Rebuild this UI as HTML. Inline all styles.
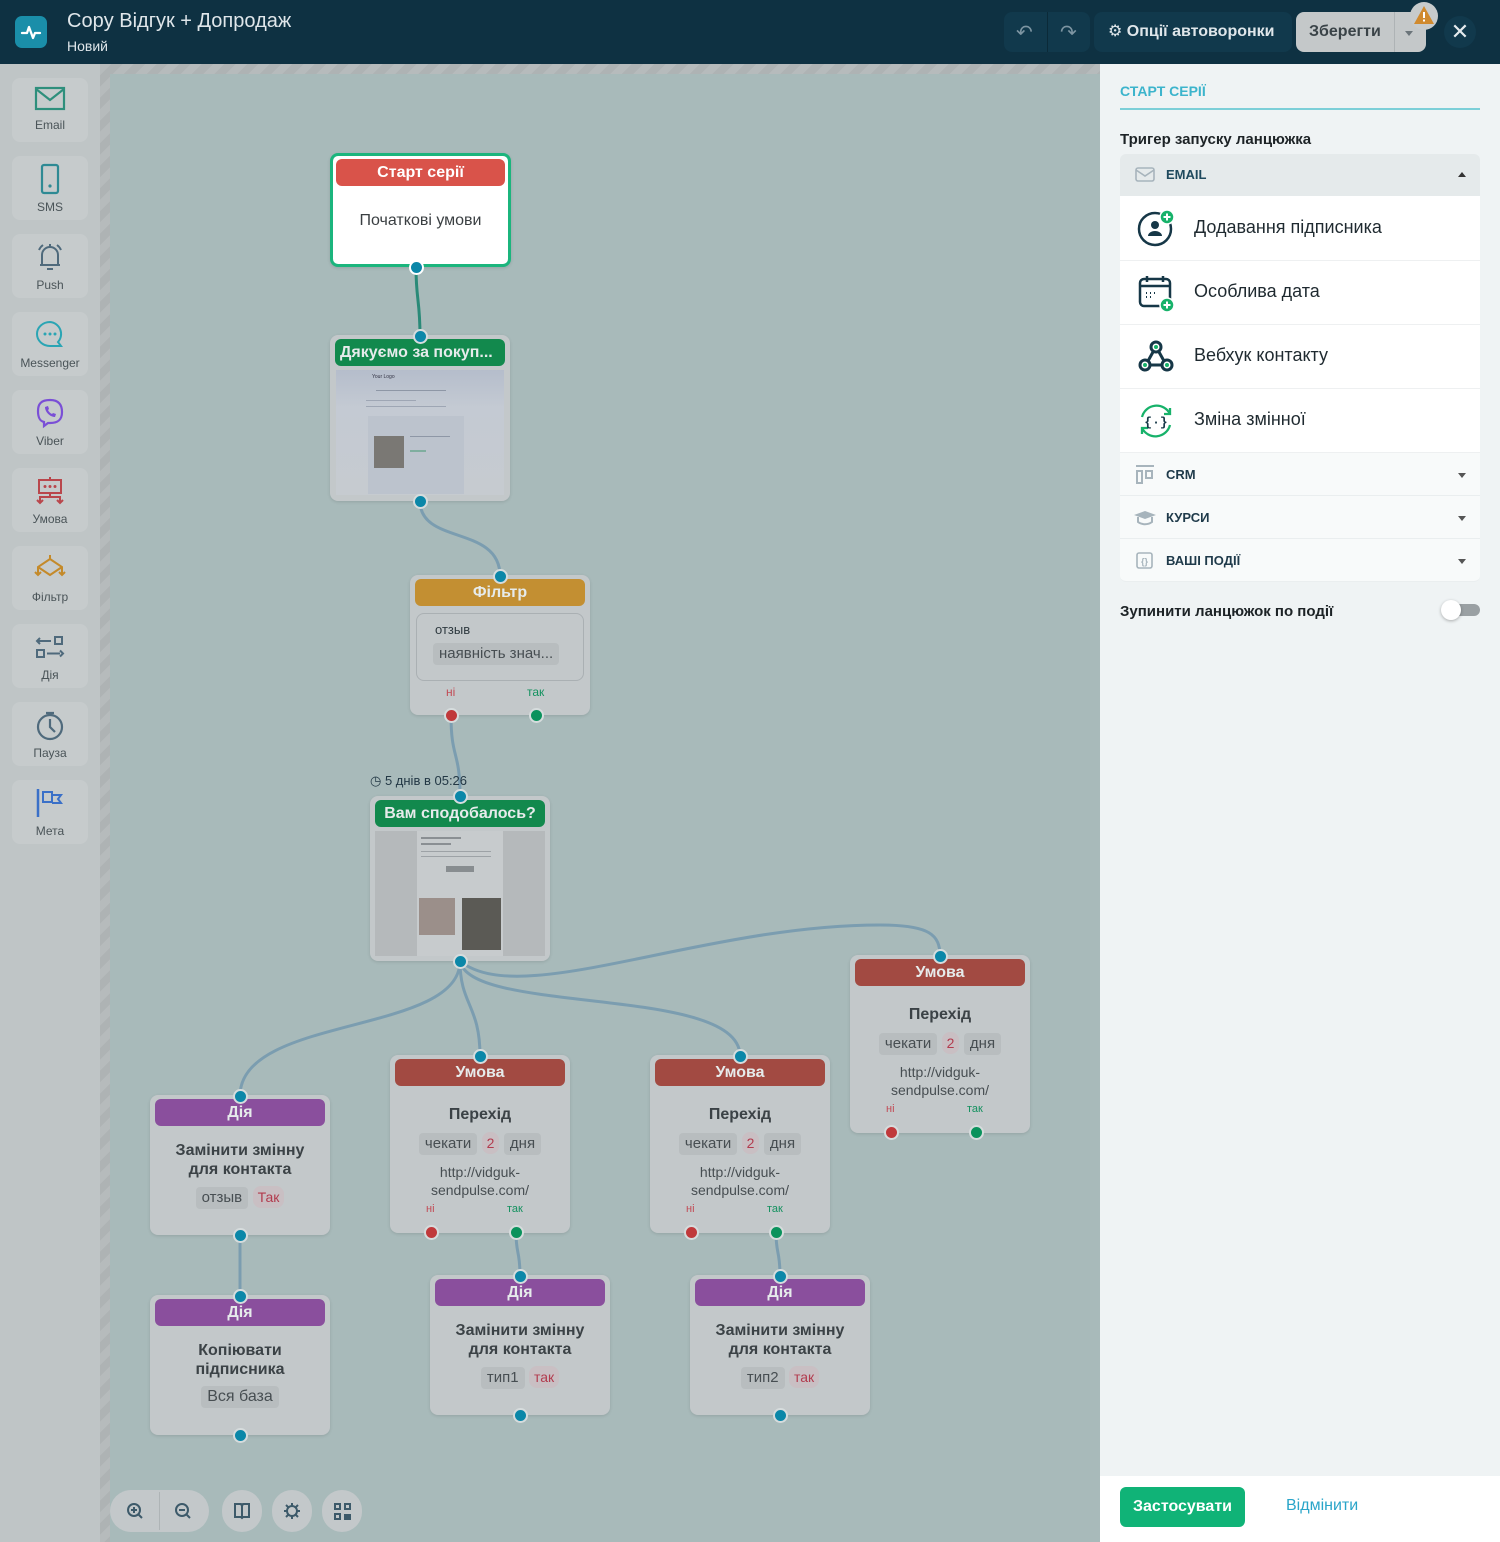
<!DOCTYPE html>
<html><head><meta charset="utf-8">
<style>
*{box-sizing:border-box;margin:0;padding:0}
body{width:1500px;height:1542px;position:relative;overflow:hidden;font-family:"Liberation Sans","DejaVu Sans",sans-serif;background:#a8baba}
.abs{position:absolute}
#top{left:0;top:0;width:1500px;height:64px;background:#0e3142}
#side{left:0;top:64px;width:100px;height:1478px;background:#bfc5c6}
.hatch{background:repeating-linear-gradient(135deg,#b6bbbc 0 8px,#aeb3b4 8px 16px)}
.si{position:absolute;left:12px;width:76px;height:64px;background:#c6cbcc;border-radius:8px;text-align:center;font-size:12px;color:#4a5458}
.si svg{display:block;margin:6px auto 4px}
.n{position:absolute;background:#c3c8ca;border-radius:8px;box-shadow:0 1px 3px rgba(0,0,0,.12);text-align:center;color:#3b4246}
.h{margin:4px 5px 0;height:27px;border-radius:6px;color:#e6ebeb;font-weight:bold;font-size:16px;line-height:27px;text-align:center}
.red{background:#a24a42}.pur{background:#8a4f9d}.grn{background:#12894d}
.t{font-weight:bold;font-size:16px;line-height:19px;color:#3b4246}
.tag{display:inline-block;background:#b8bdbf;border-radius:4px;padding:0 6px;font-size:15px;line-height:22px;color:#474e52}
.tr{display:inline-block;background:#c9bfc3;border-radius:8px;padding:0 5px;font-size:14px;line-height:22px;color:#b23b4e}
.d{position:absolute;width:15px;height:15px;border-radius:50%;background:#0b87a8;border:2px solid #d6dcdd;transform:translate(-7px,-7px)}
.dr{background:#c0393b}.dg{background:#0a925c}
.lbl{position:absolute;font-size:12px}
.row{position:absolute;left:1120px;width:360px;background:#fff;border-bottom:1px solid #eef0f1;font-size:18px;color:#1f2a30}
.sub{position:absolute;left:1120px;width:360px;height:43px;background:#f8fafa;border-bottom:1px solid #eaeeef;font-size:13px;font-weight:bold;color:#1f3a4a;line-height:43px;padding-left:46px}
.car{position:absolute;right:14px;top:20px;border:4px solid transparent;border-top:5px solid #555}
.tb{position:absolute;top:1490px;height:42px;background:#c3c8ca;border-radius:21px}
.ln{height:2px;background:#a9b1bd;margin:5px 8px}
</style></head><body>

<div id="top" class="abs">
  <div class="abs" style="left:15px;top:16px;width:32px;height:32px;background:#1a8ea9;border-radius:7px">
    <svg width="32" height="32" viewBox="0 0 32 32"><path d="M7 17h5l2-6 4 11 2-5h5" fill="none" stroke="#fff" stroke-width="2.3" stroke-linecap="round" stroke-linejoin="round"/></svg>
  </div>
  <div class="abs" style="left:67px;top:10px;font-size:20px;color:#dfe6ea">Copy Відгук + Допродаж</div>
  <div class="abs" style="left:67px;top:38px;font-size:14px;color:#dfe6ea">Новий</div>
  <div class="abs" style="left:1004px;top:12px;width:86px;height:40px;background:#11394c;border-radius:8px"></div>
  <div class="abs" style="left:1047px;top:12px;width:1px;height:40px;background:#0b2a38"></div>
  <div class="abs" style="left:1016px;top:20px;font-size:20px;color:#7d95a2">↶</div>
  <div class="abs" style="left:1060px;top:20px;font-size:20px;color:#7d95a2">↷</div>
  <div class="abs" style="left:1094px;top:12px;width:198px;height:40px;background:#11394c;border-radius:8px;color:#dfe6ea;font-weight:bold;font-size:16px;line-height:40px;padding-left:14px">⚙ Опції автоворонки</div>
  <div class="abs" style="left:1296px;top:12px;width:130px;height:40px;background:#c4c8c9;border-radius:8px;color:#3a4347;font-weight:bold;font-size:16px;line-height:40px;padding-left:13px">Зберегти</div>
  <div class="abs" style="left:1394px;top:12px;width:1px;height:40px;background:#aeb3b5"></div>
  <div class="abs" style="left:1405px;top:31px;border:4px solid transparent;border-top:5px solid #6b757a"></div>
  <div class="abs" style="left:1410px;top:2px;width:28px;height:28px;border-radius:50%;background:#c7cbcc"></div>
  <svg class="abs" style="left:1413px;top:5px" width="22" height="20" viewBox="0 0 22 20"><path d="M11 1L21 19H1z" fill="#d08a2e"/><rect x="10" y="7" width="2" height="6" fill="#fff"/><rect x="10" y="14.5" width="2" height="2" fill="#fff"/></svg>
  <div class="abs" style="left:1444px;top:16px;width:32px;height:32px;border-radius:50%;background:#11394c;color:#e5ebee;text-align:center;line-height:32px;font-size:22px">✕</div>
</div>

<div id="side" class="abs"></div>
<div class="abs hatch" style="left:100px;top:64px;width:10px;height:1478px"></div>
<div class="abs hatch" style="left:100px;top:64px;width:1000px;height:10px"></div>

<div class="si" style="top:78px"><svg width="32" height="30" viewBox="0 0 32 30" style="margin-top:6px"><rect x="2" y="4" width="28" height="21" fill="none" stroke="#2e8f7c" stroke-width="2.2"/><path d="M2 5l14 11 14-11" fill="none" stroke="#2e8f7c" stroke-width="2.2"/></svg>Email</div>
<div class="si" style="top:156px"><svg width="32" height="34" viewBox="0 0 32 34"><rect x="8" y="3" width="16" height="28" rx="2" fill="none" stroke="#2e8a94" stroke-width="2.2"/><circle cx="16" cy="24" r="1.6" fill="#2e8a94"/></svg>SMS</div>
<div class="si" style="top:234px"><svg width="32" height="34" viewBox="0 0 32 34"><path d="M8 25V15a8 8 0 0116 0v10H6h20M13 29h6M5 10a12 12 0 014-5M27 10a12 12 0 00-4-5M16 4v3" fill="none" stroke="#4f6a7c" stroke-width="2"/></svg>Push</div>
<div class="si" style="top:312px"><svg width="32" height="34" viewBox="0 0 32 34"><path d="M16 4a13 12 0 100 24h11l-3-4a12 12 0 00-8-20z" fill="none" stroke="#2aa5b4" stroke-width="2"/><circle cx="11" cy="16" r="1.5" fill="#2aa5b4"/><circle cx="16" cy="16" r="1.5" fill="#2aa5b4"/><circle cx="21" cy="16" r="1.5" fill="#2aa5b4"/></svg>Messenger</div>
<div class="si" style="top:390px"><svg width="32" height="34" viewBox="0 0 32 34"><path d="M16 4C7 4 4 8 4 15s2 10 6 11v4l4-3h2c9 0 12-4 12-11S25 4 16 4z" fill="none" stroke="#7a4fd6" stroke-width="2.2"/><path d="M11 11c0 5 5 10 10 10l1-3-3-1-1 1c-2-1-3-2-4-4l1-1-1-3z" fill="#7a4fd6"/></svg>Viber</div>
<div class="si" style="top:468px"><svg width="32" height="34" viewBox="0 0 32 34"><rect x="5" y="6" width="22" height="13" fill="none" stroke="#b9474c" stroke-width="2"/><circle cx="11" cy="12.5" r="1.5" fill="#b9474c"/><circle cx="16" cy="12.5" r="1.5" fill="#b9474c"/><circle cx="21" cy="12.5" r="1.5" fill="#b9474c"/><path d="M16 3v3M16 19v4M6 29v-6h20v6M3 26l3 3 3-3M23 26l3 3 3-3" fill="none" stroke="#b9474c" stroke-width="2"/></svg>Умова</div>
<div class="si" style="top:546px"><svg width="38" height="34" viewBox="0 0 38 34"><path d="M19 3v4M19 7l-12 8v8M19 7l12 8v8M7 15l12 8 12-8M4 20l3 3 3-3M28 20l3 3 3-3" fill="none" stroke="#c48a2a" stroke-width="2"/></svg>Фільтр</div>
<div class="si" style="top:624px"><svg width="32" height="34" viewBox="0 0 32 34"><path d="M6 8l-3 3 3 3M3 11h14" fill="none" stroke="#4f6a7c" stroke-width="2"/><rect x="21" y="7" width="7" height="7" fill="none" stroke="#4f6a7c" stroke-width="2"/><rect x="3" y="20" width="7" height="7" fill="none" stroke="#4f6a7c" stroke-width="2"/><path d="M13 23.5h13M26 20.5l3 3-3 3" fill="none" stroke="#4f6a7c" stroke-width="2"/></svg>Дія</div>
<div class="si" style="top:702px"><svg width="32" height="34" viewBox="0 0 32 34"><circle cx="16" cy="19" r="12" fill="none" stroke="#4f6a7c" stroke-width="2.2"/><path d="M16 11v8l5 5M12 5h8" fill="none" stroke="#4f6a7c" stroke-width="2.2"/></svg>Пауза</div>
<div class="si" style="top:780px"><svg width="32" height="34" viewBox="0 0 32 34"><path d="M4 3v28" stroke="#3a70c8" stroke-width="2.5"/><path d="M9 6h9v10H9zM18 9h9l-3 4 3 4h-9" fill="none" stroke="#3a70c8" stroke-width="2"/></svg>Мета</div>

<svg class="abs" style="left:0;top:0" width="1100" height="1542">
<g fill="none" stroke="#7b9db0" stroke-width="3">
<path d="M416 267 C416 300 420 300 420 336" stroke="#2a8a78"/>
<path d="M420 501 C420 545 500 525 500 576"/>
<path d="M451 715 C451 760 460 750 460 796"/>
<path d="M460 961 C460 1035 240 1015 240 1096"/>
<path d="M460 961 C460 1005 480 1005 480 1056"/>
<path d="M460 961 C470 1015 740 985 740 1056"/>
<path d="M460 961 C520 1010 700 925 880 925 C930 925 940 935 940 956"/>
<path d="M240 1235 L240 1296"/>
<path d="M516 1232 C516 1255 520 1250 520 1276"/>
<path d="M776 1232 C776 1255 780 1250 780 1276"/>
</g></svg>

<!-- Start -->
<div class="n" style="left:330px;top:153px;width:181px;height:114px;background:#fff;border:3px solid #1bb57d;border-radius:8px">
<div class="h" style="background:#d9534a;margin:3px 3px 0;color:#fff">Старт серії</div>
<div style="margin-top:26px;font-size:16px;color:#3a3f42">Початкові умови</div></div>
<div class="d" style="left:416px;top:267px;border-color:#fff"></div>

<!-- Email1 -->
<div class="n" style="left:330px;top:335px;width:180px;height:166px">
<div class="h grn" style="text-align:left;padding-left:5px">Дякуємо за покуп...</div>
<div style="margin:4px 6px 0;height:125px;background:linear-gradient(#b5bdcb,#c4cad3 30%,#c6cbd0);position:relative;text-align:left">
<div style="position:absolute;left:36px;top:4px;font-size:5px;color:#334">Your Logo</div>
<div class="ln" style="position:absolute;left:40px;top:20px;width:70px;margin:0;height:1px;background:#8e97a6"></div>
<div class="ln" style="position:absolute;left:30px;top:30px;width:50px;margin:0;height:1px;background:#9ea6b4"></div>
<div class="ln" style="position:absolute;left:30px;top:36px;width:80px;margin:0;height:1px;background:#9ea6b4"></div>
<div style="position:absolute;left:32px;top:46px;width:96px;height:78px;background:#bcc3cd"></div>
<div style="position:absolute;left:38px;top:66px;width:30px;height:32px;background:#7a7874"></div>
<div class="ln" style="position:absolute;left:74px;top:66px;width:40px;margin:0;height:1px;background:#8e97a6"></div>
<div class="ln" style="position:absolute;left:74px;top:80px;width:16px;margin:0;height:2px;background:#7fae9f"></div>
</div></div>
<div class="d" style="left:420px;top:336px"></div><div class="d" style="left:420px;top:501px"></div>

<!-- Filter -->
<div class="n" style="left:410px;top:575px;width:180px;height:140px">
<div class="h" style="background:#c38f32">Фільтр</div>
<div style="margin:7px 6px 0;height:68px;border:1px solid #aab0b3;border-radius:8px;text-align:left;padding:8px 0 0 18px;font-size:13px;color:#2f3a40">отзыв<br><span class="tag" style="margin:6px 0 0 -2px;font-size:15px;line-height:22px">наявність знач...</span></div>
<div class="lbl" style="left:36px;top:110px;color:#c24b55">ні</div><div class="lbl" style="left:117px;top:110px;color:#13915f">так</div>
</div>
<div class="d" style="left:500px;top:576px"></div><div class="d dr" style="left:451px;top:715px"></div><div class="d dg" style="left:536px;top:715px"></div>

<div class="abs" style="left:370px;top:773px;font-size:13px;color:#233845">◷ 5 днів в 05:26</div>

<!-- Email2 -->
<div class="n" style="left:370px;top:796px;width:180px;height:165px">
<div class="h grn">Вам сподобалось?</div>
<div style="margin:4px 5px 0;height:125px;background:#b5b9bb;position:relative">
<div style="position:absolute;left:42px;top:0;width:86px;height:125px;background:#c7cbcd"></div>
<div class="ln" style="position:absolute;left:46px;top:6px;width:40px;margin:0;height:2px;background:#8a8f93"></div>
<div class="ln" style="position:absolute;left:46px;top:12px;width:30px;margin:0;height:2px;background:#8a8f93"></div>
<div class="ln" style="position:absolute;left:46px;top:20px;width:70px;margin:0;height:1px;background:#9da2a6"></div>
<div class="ln" style="position:absolute;left:46px;top:25px;width:70px;margin:0;height:1px;background:#9da2a6"></div>
<div style="position:absolute;left:71px;top:35px;width:28px;height:6px;background:#888d90"></div>
<div style="position:absolute;left:44px;top:67px;width:36px;height:37px;background:#9b8f8a"></div>
<div style="position:absolute;left:87px;top:67px;width:39px;height:52px;background:#5b5a55"></div>
</div></div>
<div class="d" style="left:460px;top:796px"></div><div class="d" style="left:460px;top:961px"></div>

<!-- Umova nodes -->
<div class="n" style="left:850px;top:955px;width:180px;height:178px"><div class="h red">Умова</div>
<div class="t" style="margin-top:19px">Перехід</div>
<div style="margin-top:8px"><span class="tag">чекати</span> <span class="tr">2</span> <span class="tag">дня</span></div>
<div style="margin-top:8px;font-size:14px;line-height:18px;color:#474e52">http://vidguk-<br>sendpulse.com/</div>
<div class="lbl" style="left:36px;top:148px;color:#c24b55;font-size:11px">ні</div><div class="lbl" style="left:117px;top:148px;color:#13915f;font-size:11px">так</div></div>
<div class="d" style="left:940px;top:956px"></div><div class="d dr" style="left:891px;top:1132px"></div><div class="d dg" style="left:976px;top:1132px"></div>

<div class="n" style="left:390px;top:1055px;width:180px;height:178px"><div class="h red">Умова</div>
<div class="t" style="margin-top:19px">Перехід</div>
<div style="margin-top:8px"><span class="tag">чекати</span> <span class="tr">2</span> <span class="tag">дня</span></div>
<div style="margin-top:8px;font-size:14px;line-height:18px;color:#474e52">http://vidguk-<br>sendpulse.com/</div>
<div class="lbl" style="left:36px;top:148px;color:#c24b55;font-size:11px">ні</div><div class="lbl" style="left:117px;top:148px;color:#13915f;font-size:11px">так</div></div>
<div class="d" style="left:480px;top:1056px"></div><div class="d dr" style="left:431px;top:1232px"></div><div class="d dg" style="left:516px;top:1232px"></div>

<div class="n" style="left:650px;top:1055px;width:180px;height:178px"><div class="h red">Умова</div>
<div class="t" style="margin-top:19px">Перехід</div>
<div style="margin-top:8px"><span class="tag">чекати</span> <span class="tr">2</span> <span class="tag">дня</span></div>
<div style="margin-top:8px;font-size:14px;line-height:18px;color:#474e52">http://vidguk-<br>sendpulse.com/</div>
<div class="lbl" style="left:36px;top:148px;color:#c24b55;font-size:11px">ні</div><div class="lbl" style="left:117px;top:148px;color:#13915f;font-size:11px">так</div></div>
<div class="d" style="left:740px;top:1056px"></div><div class="d dr" style="left:691px;top:1232px"></div><div class="d dg" style="left:776px;top:1232px"></div>

<!-- Дія nodes -->
<div class="n" style="left:150px;top:1095px;width:180px;height:140px"><div class="h pur">Дія</div>
<div class="t" style="margin-top:15px">Замінити змінну<br>для контакта</div>
<div style="margin-top:7px"><span class="tag">отзыв</span> <span class="tr">Так</span></div></div>
<div class="d" style="left:240px;top:1096px"></div><div class="d" style="left:240px;top:1235px"></div>

<div class="n" style="left:150px;top:1295px;width:180px;height:140px"><div class="h pur">Дія</div>
<div class="t" style="margin-top:15px">Копіювати<br>підписника</div>
<div style="margin-top:7px"><span class="tag" style="font-size:16px">Вся база</span></div></div>
<div class="d" style="left:240px;top:1296px"></div><div class="d" style="left:240px;top:1435px"></div>

<div class="n" style="left:430px;top:1275px;width:180px;height:140px"><div class="h pur">Дія</div>
<div class="t" style="margin-top:15px">Замінити змінну<br>для контакта</div>
<div style="margin-top:7px"><span class="tag">тип1</span> <span class="tr">так</span></div></div>
<div class="d" style="left:520px;top:1276px"></div><div class="d" style="left:520px;top:1415px"></div>

<div class="n" style="left:690px;top:1275px;width:180px;height:140px"><div class="h pur">Дія</div>
<div class="t" style="margin-top:15px">Замінити змінну<br>для контакта</div>
<div style="margin-top:7px"><span class="tag">тип2</span> <span class="tr">так</span></div></div>
<div class="d" style="left:780px;top:1276px"></div><div class="d" style="left:780px;top:1415px"></div>

<!-- toolbar -->
<div class="tb" style="left:110px;width:99px"></div>
<div class="abs" style="left:159px;top:1492px;width:1px;height:38px;background:#aeb4b6"></div>
<div class="tb" style="left:222px;width:40px"></div>
<div class="tb" style="left:272px;width:40px"></div>
<div class="tb" style="left:322px;width:40px"></div>
<svg class="abs" style="left:110px;top:1490px" width="260" height="42" viewBox="0 0 260 42" fill="none" stroke="#3d5a6a" stroke-width="2">
<circle cx="24" cy="20" r="6"/><path d="M28 24l4 4M21 20h6M24 17v6"/>
<circle cx="72" cy="20" r="6"/><path d="M76 24l4 4M69 20h6"/>
<path d="M125 14h6l1 2 1-2h6v13h-6l-1 1-1-1h-6z M132 16v11"/>
<circle cx="182" cy="21" r="5"/><path d="M182 13v3M182 26v3M174 21h3M187 21h3M176 15l2 2M186 25l2 2M176 27l2-2M186 17l2-2"/>
<rect x="225" y="14" width="5" height="5"/><rect x="225" y="24" width="5" height="5"/><rect x="235" y="14" width="5" height="5"/><rect x="235" y="25" width="5" height="4" fill="#3d5a6a"/>
</svg>

<!-- Right panel -->
<div class="abs" style="left:1100px;top:64px;width:400px;height:1412px;background:#eff3f4"></div>
<div class="abs" style="left:1100px;top:1476px;width:400px;height:66px;background:#fff"></div>
<div class="abs" style="left:1120px;top:83px;font-size:14px;font-weight:bold;color:#3cb4cc">СТАРТ СЕРІЇ</div>
<div class="abs" style="left:1120px;top:108px;width:360px;height:2px;background:#7ccfd8"></div>
<div class="abs" style="left:1120px;top:131px;font-size:15px;font-weight:bold;color:#1d2326">Тригер запуску ланцюжка</div>
<div class="abs" style="left:1120px;top:154px;width:360px;height:42px;background:#e5eaeb;border-radius:6px 6px 0 0;font-size:13px;font-weight:bold;color:#1f4a5e;line-height:42px;padding-left:46px">EMAIL
<svg class="abs" style="left:15px;top:13px" width="20" height="16"><rect x="1" y="1" width="18" height="13" rx="2" fill="none" stroke="#a7b4bc" stroke-width="1.6"/><path d="M1 3l9 6 9-6" fill="none" stroke="#a7b4bc" stroke-width="1.6"/></svg>
<div class="abs" style="right:14px;top:14px;border:4px solid transparent;border-bottom:5px solid #333"></div></div>

<div class="row" style="top:196px;height:65px"><span class="abs" style="left:74px;top:21px">Додавання підписника</span>
<svg class="abs" style="left:16px;top:12px" width="40" height="40" viewBox="0 0 40 40"><circle cx="19" cy="21" r="16" fill="none" stroke="#163747" stroke-width="2.5"/><circle cx="19" cy="17" r="4" fill="#163747"/><path d="M12 28a7 5 0 0114 0z" fill="#163747"/><circle cx="31" cy="9" r="7" fill="#17b26a" stroke="#fff" stroke-width="1.5"/><path d="M31 5.5v7M27.5 9h7" stroke="#fff" stroke-width="2"/></svg></div>
<div class="row" style="top:261px;height:64px"><span class="abs" style="left:74px;top:20px">Особлива дата</span>
<svg class="abs" style="left:16px;top:12px" width="40" height="40" viewBox="0 0 40 40"><rect x="4" y="6" width="30" height="27" rx="4" fill="none" stroke="#163747" stroke-width="2.5"/><path d="M4 13h30M11 3v6M27 3v6" stroke="#163747" stroke-width="2.5"/><path d="M10 20h1M14 20h1M18 20h1M10 24h1M14 24h1" stroke="#163747" stroke-width="2"/><circle cx="31" cy="32" r="7" fill="#17b26a" stroke="#fff" stroke-width="1.5"/><path d="M31 28.5v7M27.5 32h7" stroke="#fff" stroke-width="2"/></svg></div>
<div class="row" style="top:325px;height:64px"><span class="abs" style="left:74px;top:20px">Вебхук контакту</span>
<svg class="abs" style="left:16px;top:14px" width="40" height="36" viewBox="0 0 40 36"><g fill="none" stroke="#163747" stroke-width="3"><circle cx="20" cy="8" r="5"/><circle cx="9" cy="26" r="5"/><circle cx="31" cy="26" r="5"/><path d="M17 13l-5 9M23 13l5 9M14 26h12"/></g><circle cx="20" cy="8" r="2" fill="#17b26a"/><circle cx="9" cy="26" r="2" fill="#17b26a"/><circle cx="31" cy="26" r="2" fill="#17b26a"/></svg></div>
<div class="row" style="top:389px;height:64px"><span class="abs" style="left:74px;top:20px">Зміна змінної</span>
<svg class="abs" style="left:16px;top:13px" width="40" height="38" viewBox="0 0 40 38"><path d="M6 15a15 15 0 0128-3M34 23a15 15 0 01-28 3" fill="none" stroke="#17b26a" stroke-width="2.3"/><path d="M34 6v6h-6M6 32v-6h6" fill="none" stroke="#17b26a" stroke-width="2.3"/><text x="20" y="24" font-size="13" font-weight="bold" fill="#163747" text-anchor="middle" font-family="Liberation Mono,monospace">{·}</text></svg></div>
<div class="sub" style="top:453px">CRM<svg class="abs" style="left:15px;top:12px" width="22" height="20"><path d="M1 1h18" stroke="#a7b4bc" stroke-width="2"/><rect x="2" y="6" width="5" height="12" fill="none" stroke="#a7b4bc" stroke-width="2"/><rect x="11" y="6" width="6" height="7" fill="none" stroke="#a7b4bc" stroke-width="2"/></svg><div class="car"></div></div>
<div class="sub" style="top:496px">КУРСИ<svg class="abs" style="left:13px;top:14px" width="24" height="16"><path d="M1 5l11-4 11 4-11 4z" fill="#a7b4bc"/><path d="M5 7v5c4 3 10 3 14 0V7" fill="none" stroke="#a7b4bc" stroke-width="2"/></svg><div class="car"></div></div>
<div class="sub" style="top:539px;border-radius:0 0 6px 6px">ВАШІ ПОДІЇ<svg class="abs" style="left:16px;top:13px" width="18" height="18"><rect x="1" y="1" width="15" height="15" rx="2" fill="none" stroke="#a7b4bc" stroke-width="1.6"/><text x="8.5" y="12.5" font-size="9" fill="#a7b4bc" text-anchor="middle">{}</text></svg><div class="car"></div></div>

<div class="abs" style="left:1120px;top:603px;font-size:15px;font-weight:bold;color:#1d2326">Зупинити ланцюжок по події</div>
<div class="abs" style="left:1444px;top:604px;width:36px;height:12px;border-radius:6px;background:#9aa0a3"></div>
<div class="abs" style="left:1441px;top:600px;width:20px;height:20px;border-radius:50%;background:#fff;box-shadow:0 1px 3px rgba(0,0,0,.3)"></div>

<div class="abs" style="left:1120px;top:1487px;width:125px;height:40px;background:#10b377;border-radius:6px;color:#fff;font-weight:bold;font-size:16px;line-height:40px;text-align:center">Застосувати</div>
<div class="abs" style="left:1286px;top:1497px;font-size:16px;color:#2aa5c9">Відмінити</div>
</body></html>
